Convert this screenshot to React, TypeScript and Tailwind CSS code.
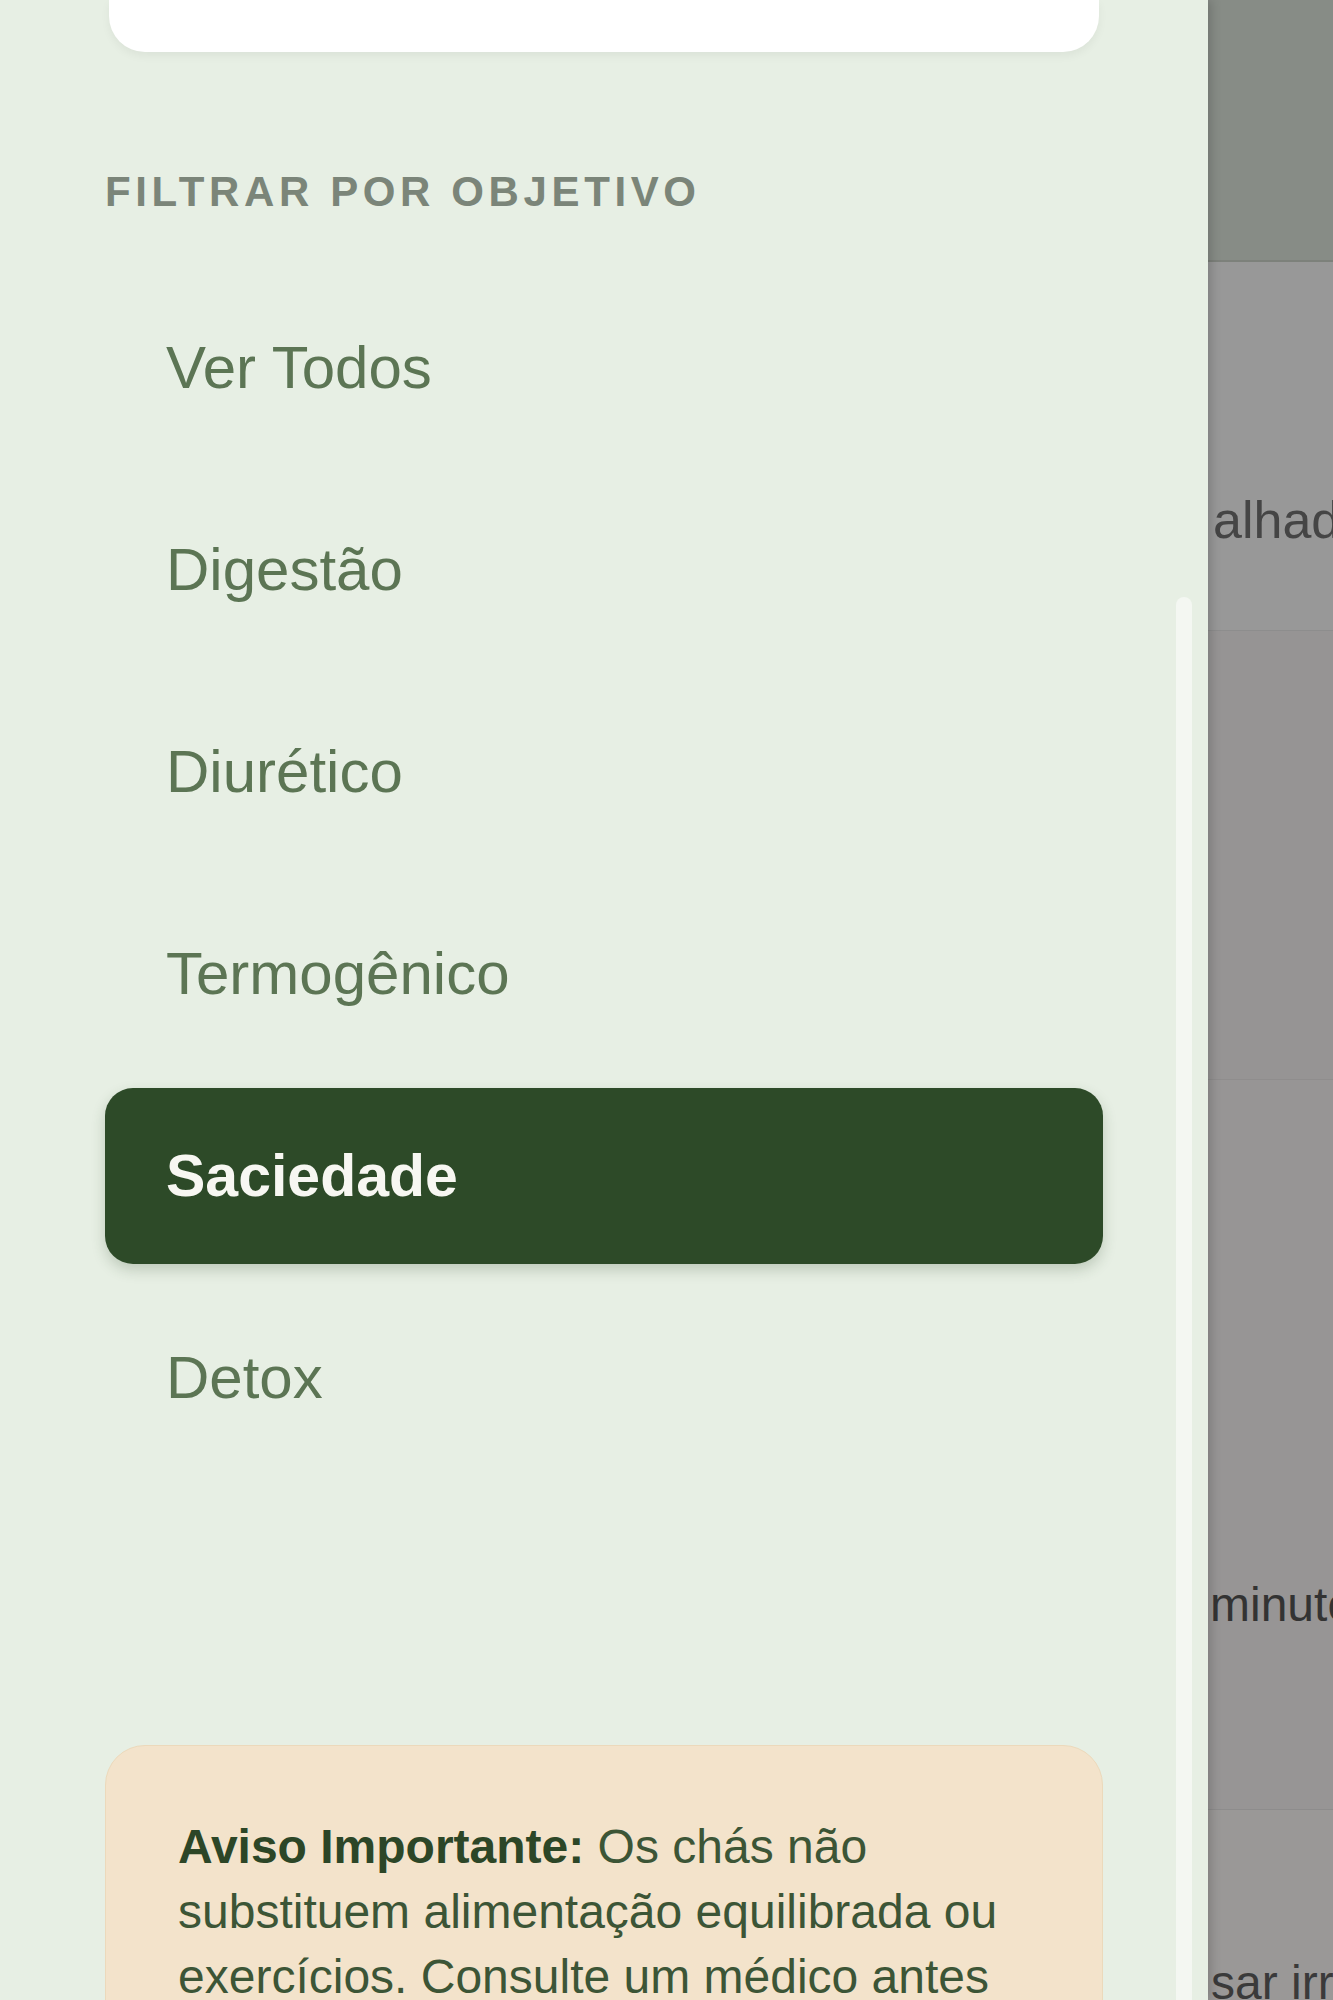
const filters = ["Ver Todos", "Digestão", "Diurético", "Termogênico", "Saciedade", "Detox"]

export default function App() {
  const active = "Saciedade"

  return (
    <div className="flex h-[2000px] w-[1333px] overflow-hidden font-['Liberation_Sans',Arial,sans-serif]">
      {/* drawer */}
      <aside className="relative z-10 flex w-[1208px] shrink-0 flex-col bg-[#e7efe4] px-[105px] shadow-[3px_0_10px_rgba(0,0,0,0.18)]">
        <div className="mx-[4px] h-[52px] shrink-0 rounded-b-[36px] bg-white shadow-[0_4px_10px_rgba(0,0,0,0.05)]" />

        <h3 className="mt-[119px] shrink-0 text-[42px] font-bold uppercase leading-[42px] tracking-[0.11em] text-[#7b8579]">
          Filtrar por objetivo
        </h3>

        <nav className="mt-[67px] flex shrink-0 flex-col gap-[26px]">
          {filters.map((f) => (
            <button
              key={f}
              className={
                f === active
                  ? "flex h-[176px] shrink-0 items-center rounded-[28px] bg-[#2d4a28] pl-[61px] text-left text-[59px] font-bold leading-none text-[#f7f7f2] shadow-[0_6px_14px_rgba(45,74,40,0.22)]"
                  : "flex h-[176px] shrink-0 items-center rounded-[28px] pl-[61px] text-left text-[60px] leading-none text-[#5c7554]"
              }
            >
              {f}
            </button>
          ))}
        </nav>

        <div className="mt-[279px] shrink-0 rounded-[40px] border border-[#ecd9bb] bg-[#f3e3cb] px-[72px] pt-[68px] pb-[60px] text-[48px] leading-[65px] text-[#3c5536]">
          <span className="font-bold text-[#2c4627]">Aviso Importante:</span> Os chás não substituem
          alimentação equilibrada ou exercícios. Consulte um médico antes de iniciar qualquer consumo.
        </div>

        {/* scrollbar */}
        <div className="absolute left-[1176px] top-[597px] h-[1403px] w-[16px] rounded-t-full bg-[#f4f7f2]" />
      </aside>

      {/* page behind overlay */}
      <div className="flex min-w-0 flex-1 flex-col bg-[#989898] whitespace-nowrap">
        <div className="h-[262px] shrink-0 border-b-2 border-[#7d817b] bg-[#878c86]" />
        <div className="h-[369px] shrink-0 border-b border-[#8d8d8d] pl-[5px] pt-[232px] text-[52px] leading-[52px] text-[#454545]">alhado</div>
        <div className="h-[449px] shrink-0 border-b border-[#8f8d8d] bg-[#969494]" />
        <div className="h-[730px] shrink-0 border-b border-[#8d8c8c] bg-[#979595] pl-[2px] pt-[501px] text-[48px] leading-[48px] text-[#333333]">minutos</div>
        <div className="flex-1 bg-[#9a9897] pl-[3px] pt-[149px] text-[48px] leading-[48px] text-[#3a3a3a]">sar irritação</div>
      </div>
    </div>
  )
}
